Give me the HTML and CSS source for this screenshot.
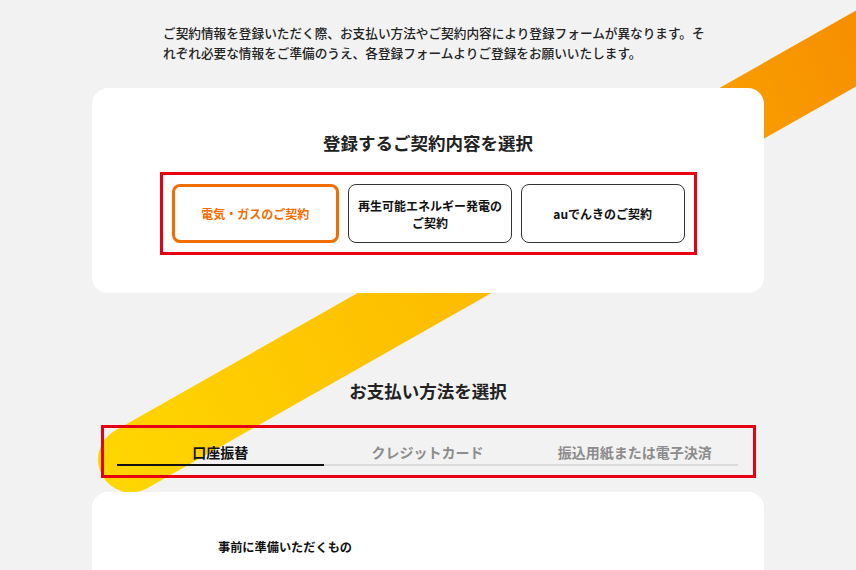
FILE: index.html
```html
<!DOCTYPE html>
<html lang="ja">
<head>
    <meta charset="UTF-8">
    <meta name="viewport" content="width=device-width, initial-scale=1.0">
    <title>ご契約の登録</title>
    <link rel="stylesheet" href="styles.css">
</head>
<body>
    <!-- decorative diagonal stripe behind the content -->
    <svg class="stripe" width="856" height="570" viewBox="0 0 856 570" aria-hidden="true">
        <defs>
            <linearGradient id="stripe-grad" gradientUnits="userSpaceOnUse" x1="100" y1="480" x2="856" y2="50">
                <stop offset="0" stop-color="#ffd700"/>
                <stop offset="0.5" stop-color="#fdba00"/>
                <stop offset="1" stop-color="#f79000"/>
            </linearGradient>
        </defs>
        <line x1="131" y1="459.5" x2="1000" y2="-33.2" stroke="url(#stripe-grad)" stroke-width="66" stroke-linecap="round"/>
    </svg>

    <div class="wrapper">
        <p class="intro">ご契約情報を登録いただく際、お支払い方法やご契約内容により登録フォームが異なります。それぞれ必要な情報をご準備のうえ、各登録フォームよりご登録をお願いいたします。</p>

        <div class="card contract">
            <h2 class="section-title">登録するご契約内容を選択</h2>
            <div class="outline choices">
                <button class="choice active">電気・ガスのご契約</button>
                <button class="choice">再生可能エネルギー発電の<br>ご契約</button>
                <button class="choice">auでんきのご契約</button>
            </div>
        </div>

        <h2 class="section-title payment-title">お支払い方法を選択</h2>
        <div class="outline tabs">
            <div class="tab active">口座振替</div>
            <div class="tab">クレジットカード</div>
            <div class="tab">振込用紙または電子決済</div>
        </div>

        <div class="card details">
            <h3 class="details-title">事前に準備いただくもの</h3>
        </div>
    </div>
</body>
</html>
```

FILE: styles.css
```css
body {
    font-family: "Noto Sans CJK JP", "Noto Sans", sans-serif;
    margin: 0;
    padding: 0;
    background: #f2f2f2;
    color: #222;
    position: relative;
    overflow: hidden;
    height: 570px;
}

.stripe {
    position: absolute;
    top: 0;
    left: 0;
    z-index: 0;
}

.wrapper {
    position: relative;
    z-index: 1;
    width: 672px;
    margin: 0 auto;
}

.intro {
    margin: 0 0 0 71px;
    padding-top: 23px;
    width: 550px;
    font-size: 12.65px;
    line-height: 19.5px;
    font-weight: 500;
    color: #222;
}

.card {
    background: #fff;
    border-radius: 16px;
}

.contract {
    margin-top: 26px;
    padding: 42px 0 38px;
}

.section-title {
    margin: 0;
    text-align: center;
    font-size: 17.5px;
    line-height: 26px;
    font-weight: 700;
    color: #222;
}

.contract .section-title {
    margin-bottom: 16px;
}

.outline {
    border: 3px solid #e60012;
    box-sizing: border-box;
}

.choices {
    width: 537px;
    height: 83px;
    margin: 0 auto;
    padding: 9px;
    display: flex;
    gap: 9px;
}

.choice {
    flex: 1;
    height: 59px;
    box-sizing: border-box;
    background: #fff;
    border: 1px solid #333;
    border-radius: 8px;
    font-family: inherit;
    font-size: 12px;
    line-height: 17px;
    font-weight: 700;
    color: #111;
    padding: 0;
    cursor: pointer;
}

.choice.active {
    border: 3px solid #f06e00;
    color: #f06e00;
}

.payment-title {
    margin-top: 85px;
}

.tabs {
    width: 655px;
    margin: 21px auto 0;
    padding: 0 14px 9px 13px;
    display: flex;
}

.tab {
    flex: 1;
    text-align: center;
    padding: 14px 0 2px;
    font-size: 14px;
    line-height: 20px;
    font-weight: 700;
    color: #8c8c8c;
    border-bottom: 2px solid #dcdcdc;
}

.tab.active {
    color: #111;
    border-bottom-color: #111;
}

.details {
    margin-top: 14px;
    height: 200px;
    padding: 47px 0 0 126px;
    box-sizing: border-box;
}

.details-title {
    margin: 0;
    font-size: 12.2px;
    line-height: 16px;
    font-weight: 700;
    color: #111;
}
```
